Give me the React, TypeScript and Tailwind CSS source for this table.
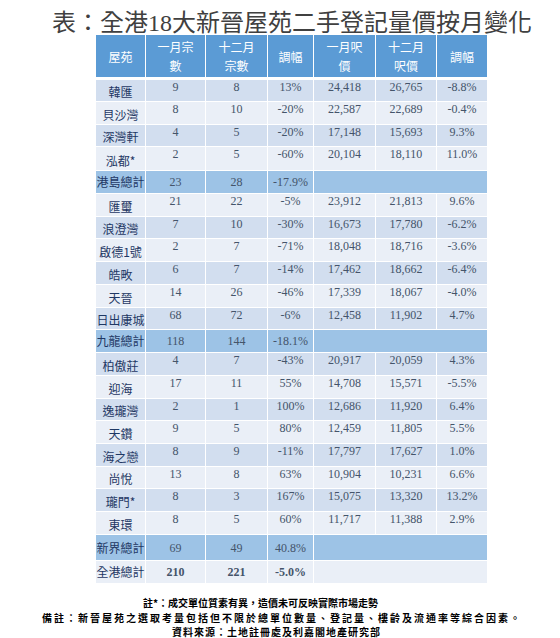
import React from "react";

type Row = {
  n: string;
  a: string;
  b: string;
  c: string;
  d?: string;
  e?: string;
  f?: string;
  t: "dark" | "light" | "sub" | "total";
  h: string;
};

const rows: Row[] = [
  { n: "韓匯", a: "9", b: "8", c: "13%", d: "24,418", e: "26,765", f: "-8.8%", t: "dark", h: "h-[21px]" },
  { n: "貝沙灣", a: "8", b: "10", c: "-20%", d: "22,587", e: "22,689", f: "-0.4%", t: "light", h: "h-[22px]" },
  { n: "深灣軒", a: "4", b: "5", c: "-20%", d: "17,148", e: "15,693", f: "9.3%", t: "dark", h: "h-[21px]" },
  { n: "泓都*", a: "2", b: "5", c: "-60%", d: "20,104", e: "18,110", f: "11.0%", t: "light", h: "h-[23px]" },
  { n: "港島總計", a: "23", b: "28", c: "-17.9%", t: "sub", h: "h-[22px]" },
  { n: "匯璽", a: "21", b: "22", c: "-5%", d: "23,912", e: "21,813", f: "9.6%", t: "light", h: "h-[22px]" },
  { n: "浪澄灣", a: "7", b: "10", c: "-30%", d: "16,673", e: "17,780", f: "-6.2%", t: "dark", h: "h-[21px]" },
  { n: "啟德1號", a: "2", b: "7", c: "-71%", d: "18,048", e: "18,716", f: "-3.6%", t: "light", h: "h-[22px]" },
  { n: "皓畋", a: "6", b: "7", c: "-14%", d: "17,462", e: "18,662", f: "-6.4%", t: "dark", h: "h-[22px]" },
  { n: "天晉", a: "14", b: "26", c: "-46%", d: "17,339", e: "18,067", f: "-4.0%", t: "light", h: "h-[22px]" },
  { n: "日出康城", a: "68", b: "72", c: "-6%", d: "12,458", e: "11,902", f: "4.7%", t: "dark", h: "h-[21px]" },
  { n: "九龍總計", a: "118", b: "144", c: "-18.1%", t: "sub", h: "h-[22px]" },
  { n: "柏傲莊", a: "4", b: "7", c: "-43%", d: "20,917", e: "20,059", f: "4.3%", t: "dark", h: "h-[22px]" },
  { n: "迎海", a: "17", b: "11", c: "55%", d: "14,708", e: "15,571", f: "-5.5%", t: "light", h: "h-[22px]" },
  { n: "逸瓏灣", a: "2", b: "1", c: "100%", d: "12,686", e: "11,920", f: "6.4%", t: "dark", h: "h-[21px]" },
  { n: "天鑽", a: "9", b: "5", c: "80%", d: "12,459", e: "11,805", f: "5.5%", t: "light", h: "h-[22px]" },
  { n: "海之戀", a: "8", b: "9", c: "-11%", d: "17,797", e: "17,627", f: "1.0%", t: "dark", h: "h-[22px]" },
  { n: "尚悅", a: "13", b: "8", c: "63%", d: "10,904", e: "10,231", f: "6.6%", t: "light", h: "h-[21px]" },
  { n: "瓏門*", a: "8", b: "3", c: "167%", d: "15,075", e: "13,320", f: "13.2%", t: "dark", h: "h-[22px]" },
  { n: "東環", a: "8", b: "5", c: "60%", d: "11,717", e: "11,388", f: "2.9%", t: "light", h: "h-[22px]" },
  { n: "新界總計", a: "69", b: "49", c: "40.8%", t: "sub", h: "h-[25px]" },
  { n: "全港總計", a: "210", b: "221", c: "-5.0%", t: "total", h: "h-[22px]" },
];

const bgFor: Record<Row["t"], string> = {
  dark: "bg-[#d2deef]",
  light: "bg-[#eaeff7]",
  sub: "bg-[#9dc3e6]",
  total: "bg-[#eaeff7]",
};

const cols = "grid grid-cols-[49px_59px_61px_45px_61px_60px_50px] gap-x-[1px]";
const cjk = "font-['Noto_Sans_CJK_TC','Noto_Sans_CJK_SC',sans-serif]";
const serif = "font-['Liberation_Serif','Times_New_Roman',serif]";

function HeadCell({ children }: { children: React.ReactNode }) {
  return (
    <div className={`bg-[#5b9bd5] flex flex-col items-center justify-center text-white text-[12px] leading-[19px] ${cjk}`}>
      {children}
    </div>
  );
}

function DataRow({ r }: { r: Row }) {
  const bg = bgFor[r.t];
  const centered = r.t === "sub" || r.t === "total";
  const nameCls = centered
    ? `${bg} flex items-center justify-center text-[12px] leading-[16px] text-[#1f3864] whitespace-nowrap ${cjk}`
    : `${bg} flex items-end justify-center pb-[1px] text-[12px] leading-[16px] text-[#1f3864] whitespace-nowrap ${cjk}`;
  const numBase = centered
    ? `${bg} flex items-center justify-center text-[12px] leading-[14px] text-[#44546a] ${serif}`
    : `${bg} flex items-start justify-center text-[12px] leading-[14px] text-[#44546a] ${serif}`;
  const numCls = r.t === "total" ? `${numBase} font-bold` : numBase;
  return (
    <div className={`${cols} ${r.h}`}>
      <div className={nameCls}>{r.n}</div>
      <div className={numCls}>{r.a}</div>
      <div className={numCls}>{r.b}</div>
      <div className={numCls}>{r.c}</div>
      {centered ? (
        <div className={`${bg} col-span-3`} />
      ) : (
        <>
          <div className={numCls}>{r.d}</div>
          <div className={numCls}>{r.e}</div>
          <div className={numCls}>{r.f}</div>
        </>
      )}
    </div>
  );
}

export default function App() {
  return (
    <div className="w-[560px] h-[638px] overflow-hidden bg-white">
      <div className={`h-[35px] pt-[7px] pl-[52px] text-[24px] leading-[28px] text-[#404040] whitespace-nowrap ${cjk}`}>
        表：全港<span className={serif}>18</span>大新晉屋苑二手登記量價按月變化
      </div>

      <div className="ml-[96px] w-[391px]">
        <div className={`${cols} h-[42px] mb-[3px]`}>
          <HeadCell>屋苑</HeadCell>
          <HeadCell>
            <span>一月宗</span>
            <span>數</span>
          </HeadCell>
          <HeadCell>
            <span>十二月</span>
            <span>宗數</span>
          </HeadCell>
          <HeadCell>調幅</HeadCell>
          <HeadCell>
            <span>一月呎</span>
            <span>價</span>
          </HeadCell>
          <HeadCell>
            <span>十二月</span>
            <span>呎價</span>
          </HeadCell>
          <HeadCell>調幅</HeadCell>
        </div>
        <div className="flex flex-col gap-y-[1px]">
          {rows.map((r) => (
            <DataRow key={r.n} r={r} />
          ))}
        </div>
      </div>

      <div className={`mt-[12px] text-[10px] leading-[15px] font-bold text-black whitespace-nowrap ${cjk}`}>
        <div className="h-[15px] pl-[143px]">註*：成交單位質素有異，造價未可反映實際市場走勢</div>
        <div className="h-[15px] pl-[42px] tracking-[2px]">備註：新晉屋苑之選取考量包括但不限於總單位數量、登記量、樓齡及流通率等綜合因素。</div>
        <div className="h-[13px] pl-[172px] tracking-[1px] leading-[13px]">資料來源：土地註冊處及利嘉閣地產研究部</div>
      </div>
    </div>
  );
}
